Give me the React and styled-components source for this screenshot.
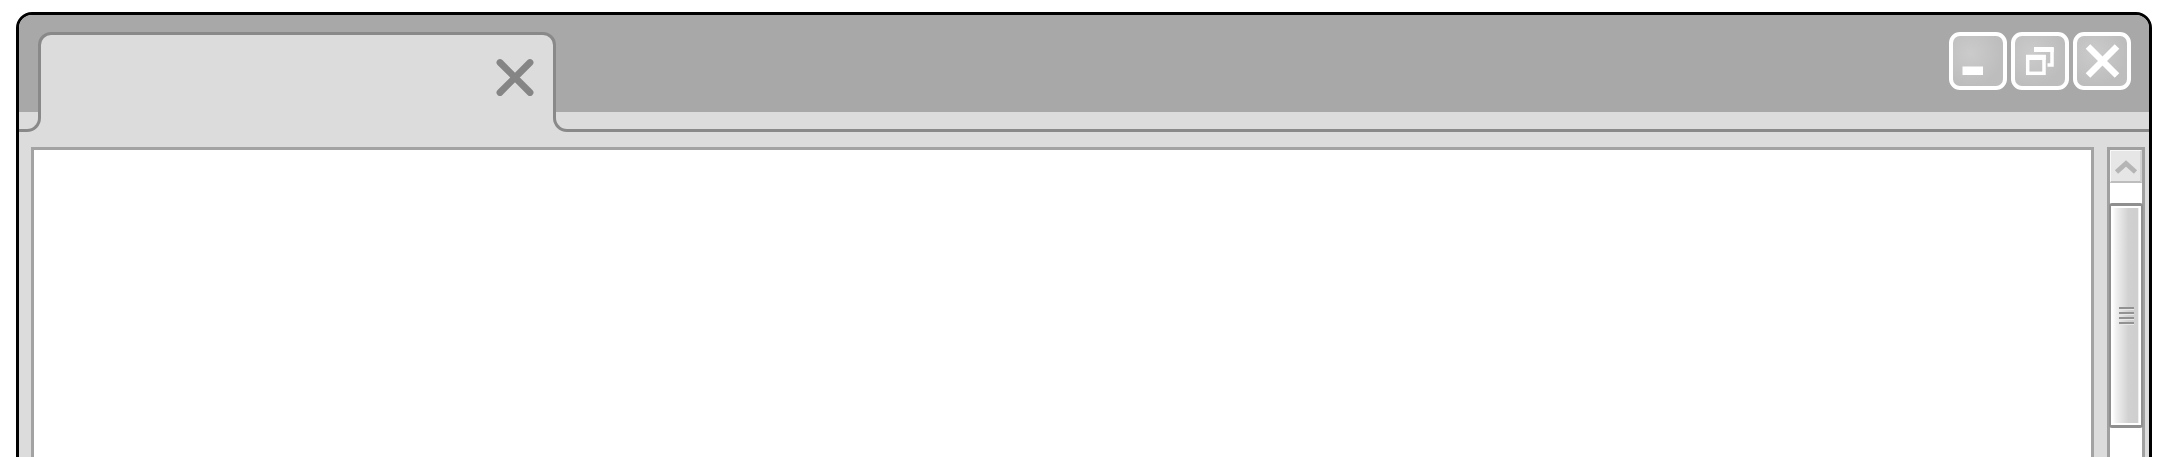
import React from "react";
import styled, { createGlobalStyle } from "styled-components";

const Global = createGlobalStyle`
  * { box-sizing: border-box; }
  body { margin: 0; background: #fff; overflow: hidden; font-family: "Liberation Sans", Arial, sans-serif; }
`;

const Page = styled.main`
  height: 457px;
  padding: 12px 16px 0;
  overflow: hidden;
`;

const Window = styled.section`
  display: flex;
  flex-direction: column;
  height: 480px;
  overflow: hidden;
  border: 3px solid #000;
  border-radius: 16px;
  background: #dcdcdc;
`;

const TitleBar = styled.header`
  display: flex;
  flex: none;
  justify-content: space-between;
  align-items: flex-start;
  height: 97px;
  padding: 17px 18px 0 19px;
  background: #a8a8a8;
`;

const Tab = styled.div`
  display: flex;
  justify-content: flex-end;
  width: 518px;
  height: 80px;
  padding: 23px 19px 0 0;
  border: 3px solid #898989;
  border-bottom: 0;
  border-radius: 13px 13px 0 0;
  background: #dcdcdc;
`;

const TabBase = styled.div`
  display: flex;
  flex: none;
  justify-content: space-between;
  height: 20px;
`;

const LeftFoot = styled.div`
  width: 22px;
  border: solid #898989;
  border-width: 0 3px 3px 0;
  border-bottom-right-radius: 14px;
`;

const RightFoot = styled.div`
  width: 1596px;
  border: solid #898989;
  border-width: 0 0 3px 3px;
  border-bottom-left-radius: 14px;
`;

const Controls = styled.div`
  display: flex;
  gap: 4px;
`;

const ControlButton = styled.button`
  display: flex;
  width: 58px;
  height: 58px;
  padding: 0;
  border: 4px solid #fff;
  border-radius: 11px;
  background: radial-gradient(circle at 35% 35%, #cbcbcb, #bdbdbd 70%);
`;

const Body = styled.div`
  display: flex;
  flex: 1;
  justify-content: space-between;
  padding: 15px 4px 0 12px;
`;

const Content = styled.div`
  width: 2063px;
  border: 3px solid #a3a3a3;
  background: #fff;
`;

const ScrollBar = styled.div`
  width: 38px;
  border: 3px solid #a0a0a0;
  background: #fff;
`;

const ScrollUp = styled.button`
  display: block;
  width: 32px;
  height: 33px;
  padding: 0;
  border: 1px solid #f8f8f8;
  border-bottom: 2px solid #bdbdbd;
  border-right: 2px solid #d2d2d2;
  background: #e6e6e6;
`;

const Thumb = styled.div`
  display: flex;
  justify-content: center;
  align-items: center;
  height: 225px;
  margin: 20px -1px 0;
  border: 3px solid #8f8f8f;
  border-width: 3px 2px 3px 2px;
  border-radius: 3px;
  background: linear-gradient(90deg, #fff 0 5%, #f0f0f0 18%, #d1d1d1 58%, #cecece 91%, #fff 92%);
  box-shadow: inset 0 2px #fff, inset 0 -2px #fff;
`;

const Grip = styled.div`
  display: flex;
  flex-direction: column;
  gap: 3px;
  width: 15px;
`;

const GripLine = styled.span`
  height: 2px;
  background: #929292;
  box-shadow: 0 1px #e8e8e8;
`;

function TabCloseIcon() {
  return (
    <svg width="38" height="39" viewBox="0 0 38 39" fill="none" stroke="#858585" strokeWidth="6.8" strokeLinecap="round">
      <path d="M4 4.5 34 34.5M34 4.5 4 34.5" />
    </svg>
  );
}

function MinimizeIcon() {
  return (
    <svg width="50" height="50">
      <rect x="9.5" y="30.5" width="20.5" height="8.5" fill="#fff" />
    </svg>
  );
}

function RestoreIcon() {
  return (
    <svg width="50" height="50" fill="none" stroke="#fff">
      <path d="M19.5 13.5H37v15.500h-4.500" strokeWidth="3.500" />
      <path d="M19 13.500h19.700" strokeWidth="5" />
      <rect x="12.700" y="20.500" width="16.300" height="16.800" strokeWidth="3.500" />
      <path d="M11 21.500h19.700" strokeWidth="5" />
    </svg>
  );
}

function CloseIcon() {
  return (
    <svg width="50" height="50" fill="none" stroke="#fff" strokeWidth="6.5">
      <path d="M11 10.500 40 39.500M40 10.500 11 39.500" />
    </svg>
  );
}

function UpIcon() {
  return (
    <svg width="29" height="30" fill="none" stroke="#b5b5b5" strokeWidth="4.8">
      <path d="M5.500 21 15 12.500 24.500 21" />
    </svg>
  );
}

export default function App() {
  return (
    <>
      <Global />
      <Page>
        <Window>
          <TitleBar>
            <Tab><TabCloseIcon /></Tab>
            <Controls>
              <ControlButton><MinimizeIcon /></ControlButton>
              <ControlButton><RestoreIcon /></ControlButton>
              <ControlButton><CloseIcon /></ControlButton>
            </Controls>
          </TitleBar>
          <TabBase>
            <LeftFoot />
            <RightFoot />
          </TabBase>
          <Body>
            <Content />
            <ScrollBar>
              <ScrollUp><UpIcon /></ScrollUp>
              <Thumb>
                <Grip>
                  <GripLine /><GripLine /><GripLine /><GripLine />
                </Grip>
              </Thumb>
            </ScrollBar>
          </Body>
        </Window>
      </Page>
    </>
  );
}
